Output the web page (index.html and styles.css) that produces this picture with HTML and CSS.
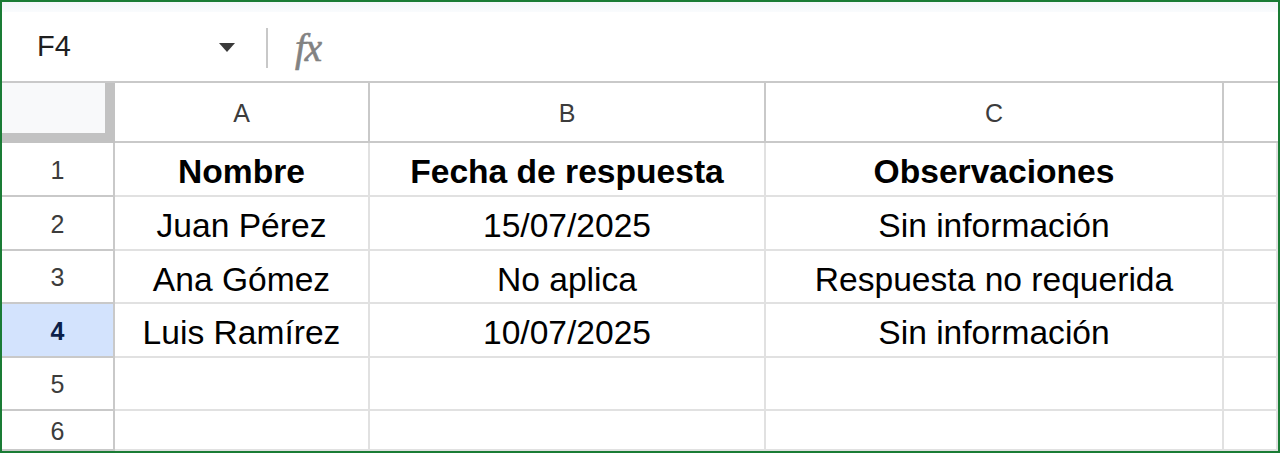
FILE: index.html
```html
<!DOCTYPE html>
<html lang="es">
<head>
<meta charset="utf-8">
<title>Hoja de cálculo</title>
<link rel="stylesheet" href="styles.css">
</head>
<body>
<div class="frame">
  <div class="topband"></div>
  <div class="fbar">
    <div class="namebox">
      <span class="ref">F4</span>
      <span class="arrow"></span>
    </div>
    <span class="sep"></span>
    <span class="fx">fx</span>
  </div>
  <div class="grid">
    <div class="corner"></div>
    <div class="colh">A</div>
    <div class="colh">B</div>
    <div class="colh">C</div>
    <div class="colh last"></div>

    <div class="rowh">1</div>
    <div class="cell b">Nombre</div>
    <div class="cell b">Fecha de respuesta</div>
    <div class="cell b">Observaciones</div>
    <div class="cell"></div>

    <div class="rowh">2</div>
    <div class="cell">Juan Pérez</div>
    <div class="cell">15/07/2025</div>
    <div class="cell">Sin información</div>
    <div class="cell"></div>

    <div class="rowh">3</div>
    <div class="cell">Ana Gómez</div>
    <div class="cell">No aplica</div>
    <div class="cell">Respuesta no requerida</div>
    <div class="cell"></div>

    <div class="rowh sel">4</div>
    <div class="cell">Luis Ramírez</div>
    <div class="cell">10/07/2025</div>
    <div class="cell">Sin información</div>
    <div class="cell"></div>

    <div class="rowh">5</div>
    <div class="cell"></div>
    <div class="cell"></div>
    <div class="cell"></div>
    <div class="cell"></div>

    <div class="rowh">6</div>
    <div class="cell"></div>
    <div class="cell"></div>
    <div class="cell"></div>
    <div class="cell"></div>
  </div>
</div>
</body>
</html>
```

FILE: styles.css
```css
html, body {
  margin: 0;
  padding: 0;
  background: #ffffff;
}

.frame {
  width: 1280px;
  height: 453px;
  box-sizing: border-box;
  border: 2px solid #1a7c35;
  display: flex;
  flex-direction: column;
  overflow: hidden;
  font-family: "Liberation Sans", Arial, sans-serif;
  color: #000;
}

.topband {
  height: 10px;
  background: linear-gradient(#f3f6fa, #f9fbfd);
}

.fbar {
  height: 69px;
  border-bottom: 2px solid #c9c9c9;
  display: flex;
  align-items: center;
  padding-left: 33px;
  background: #fff;
}

.namebox {
  width: 200px;
  display: flex;
  align-items: center;
  justify-content: space-between;
}

.ref {
  font-size: 29px;
  color: #1f1f1f;
  padding-left: 2px;
}

.arrow {
  width: 0;
  height: 0;
  border-left: 8.5px solid transparent;
  border-right: 8.5px solid transparent;
  border-top: 9px solid #3a3a3a;
  margin-top: 2px;
}

.sep {
  width: 2px;
  height: 40px;
  background: #c8c8c8;
  margin-left: 31px;
  margin-top: 2px;
}

.fx {
  margin-left: 27px;
  font-family: "Liberation Serif", "Times New Roman", serif;
  font-style: italic;
  font-size: 39px;
  color: #828282;
  letter-spacing: -1px;
  margin-top: 2px;
  -webkit-text-stroke: 0.6px #828282;
}

.grid {
  flex: 1;
  display: grid;
  grid-template-columns: 113px 255px 396px 458px 1fr;
  grid-template-rows: 60px 54px 54px 53px 54px 53px 1fr;
}

.corner {
  background: #f8f9fa;
  border-right: 10px solid #c2c2c2;
  border-bottom: 10px solid #c2c2c2;
}

.colh {
  border-right: 2px solid #c9c9c9;
  border-bottom: 2px solid #c9c9c9;
  display: flex;
  align-items: center;
  justify-content: center;
  font-size: 25px;
  color: #3c3c3c;
  padding-top: 2px;
}

.colh.last {
  border-right: none;
}

.rowh {
  border-right: 2px solid #c9c9c9;
  border-bottom: 2px solid #c9c9c9;
  display: flex;
  align-items: center;
  justify-content: center;
  font-size: 25px;
  color: #3c3c3c;
  padding-top: 2px;
}

.rowh.sel {
  background: #d3e3fd;
  color: #0b1f4a;
  font-weight: bold;
}

.cell {
  border-right: 2px solid #e1e1e1;
  border-bottom: 2px solid #e1e1e1;
  display: flex;
  align-items: center;
  justify-content: center;
  font-size: 33.6px;
  line-height: 34px;
  padding-top: 6px;
  white-space: nowrap;
  overflow: hidden;
}

.cell.b {
  font-weight: bold;
}
```
